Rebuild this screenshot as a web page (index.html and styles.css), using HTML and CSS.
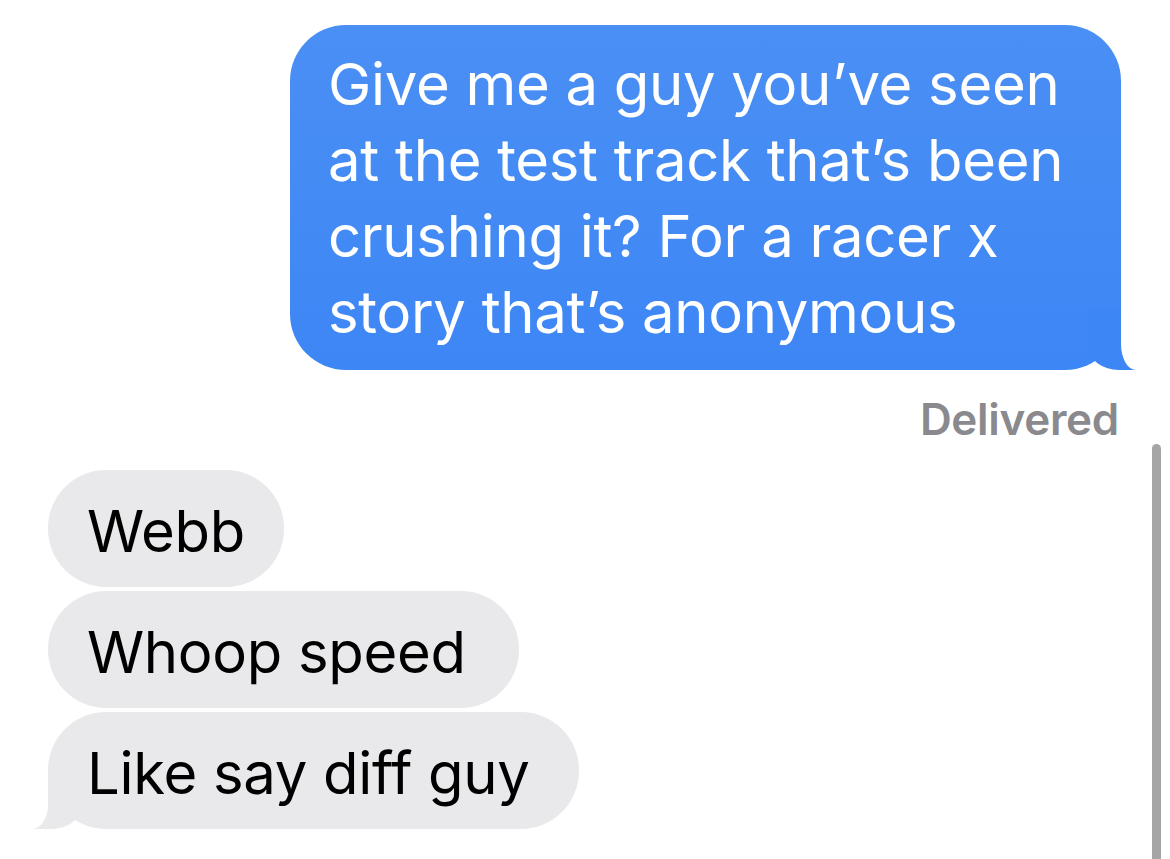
FILE: index.html
```html
<!DOCTYPE html>
<html lang="en">
<head>
    <meta charset="UTF-8">
    <meta name="viewport" content="width=device-width, initial-scale=1.0">
    <title>Messages</title>
    <link rel="stylesheet" href="styles.css">
</head>
<body>
    <div class="thread">
        <div class="bubble sent">Give me a guy you’ve seen at the test track that’s been crushing it? For a racer x story that’s anonymous</div>
        <div class="status">Delivered</div>

        <div class="group">
            <div class="bubble received">Webb</div>
            <div class="bubble received wide">Whoop speed</div>
            <div class="bubble received wide last">Like say diff guy</div>
        </div>
    </div>
    <div class="scrollbar"></div>
</body>
</html>
```

FILE: styles.css
```css
body {
    margin: 0;
    background: #fff;
    font-family: Inter, "Noto Sans", sans-serif;
    overflow: hidden;
}
.thread {
    display: flex;
    flex-direction: column;
    padding: 25px 49px 0 48px;
}
.bubble {
    position: relative;
    font-size: 58px;
    line-height: 76px;
    padding: 21px 39px 20px 38px;
    border-radius: 56px;
    max-width: 754px;
}
.sent {
    align-self: flex-end;
    color: #fff;
    background: linear-gradient(#4a8ff4, #3d86f5);
    letter-spacing: -0.3px;
}
/* tail: filled block plus a white cut-out */
.sent::before {
    content: "";
    position: absolute;
    bottom: 0;
    right: -16px;
    width: 48px;
    height: 62px;
    background: #3d86f5;
    border-bottom-left-radius: 30px 22px;
}
.sent::after {
    content: "";
    position: absolute;
    bottom: 0;
    right: -45px;
    width: 45px;
    height: 66px;
    background: #fff;
    border-bottom-left-radius: 15px 26px;
}
.status {
    align-self: flex-end;
    margin-top: 23px;
    margin-right: 2px;
    font-size: 44px;
    font-weight: 600;
    color: #8a8a8e;
    line-height: 52px;
    letter-spacing: -0.3px;
}
.group {
    display: flex;
    flex-direction: column;
    align-items: flex-start;
    gap: 4px;
    margin-top: 25px;
}
.received {
    color: #000;
    background: #e9e9eb;
    padding: 23px 39px 18px 39px;
    border-radius: 58px;
    letter-spacing: -0.3px;
}
.received.wide {
    padding-right: 53px;
}
.received.last {
    padding-right: 49px;
}
.received.last::before {
    content: "";
    position: absolute;
    bottom: 0;
    left: -16px;
    width: 48px;
    height: 62px;
    background: #e9e9eb;
    border-bottom-right-radius: 30px 20px;
}
.received.last::after {
    content: "";
    position: absolute;
    bottom: 0;
    left: -45px;
    width: 45px;
    height: 66px;
    background: #fff;
    border-bottom-right-radius: 16px 24px;
}
.scrollbar {
    position: absolute;
    top: 444px;
    left: 1152px;
    width: 9px;
    height: 420px;
    border-radius: 5px;
    background: #a5a5a5;
}
```
